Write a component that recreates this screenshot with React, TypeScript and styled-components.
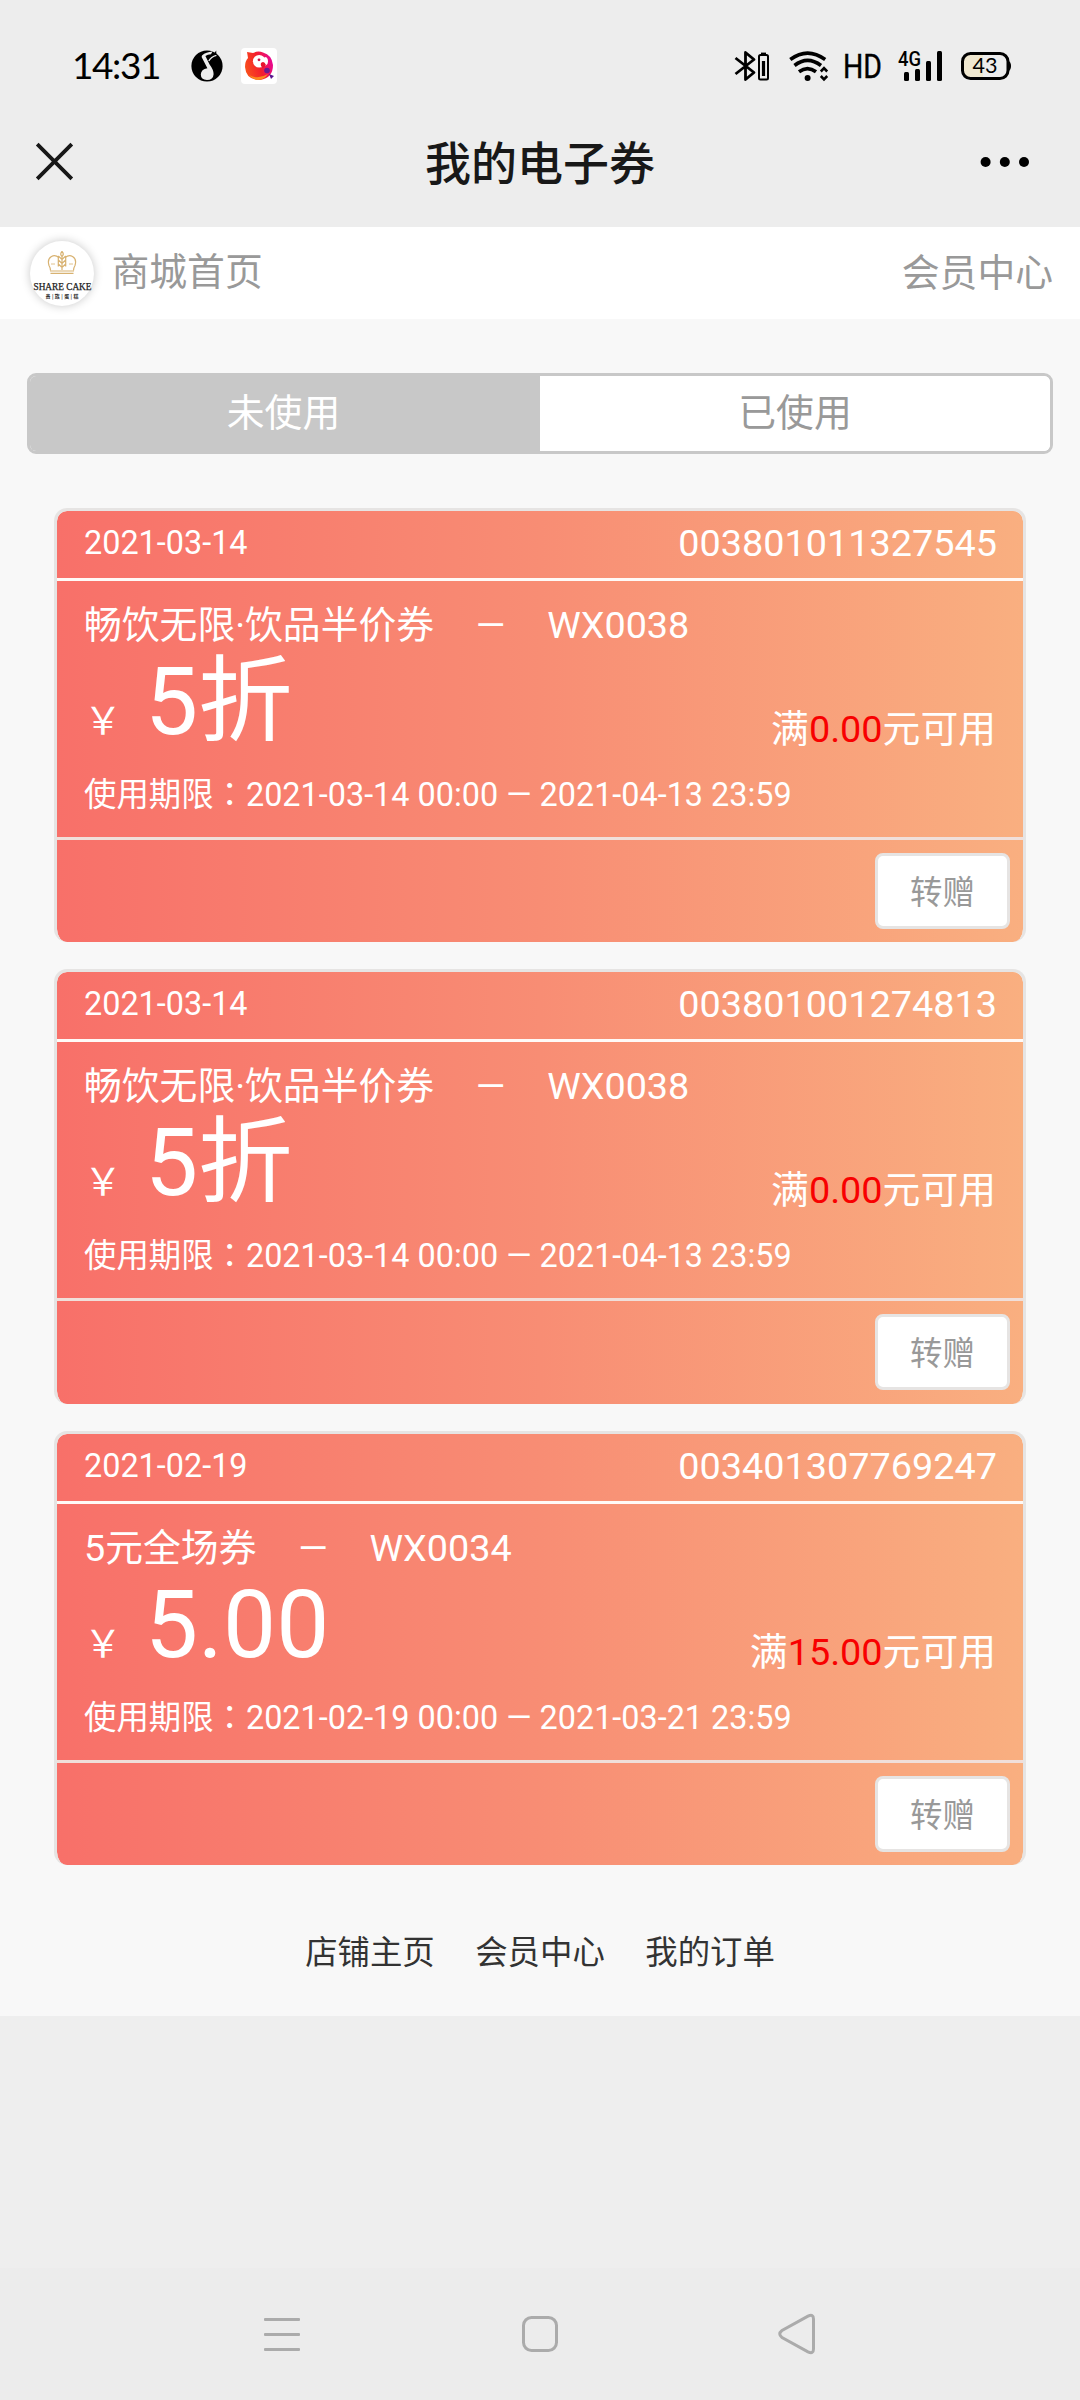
import React from "react";
import styled, { createGlobalStyle } from "styled-components";

const GlobalStyle = createGlobalStyle`
  * { box-sizing: border-box; }
  html, body { margin: 0; padding: 0; background: #ededed; }
  body { font-family: Roboto, "Noto Sans CJK SC", sans-serif; }
`;

const Screen = styled.div`
  width: 1080px;
  height: 2400px;
  display: flex;
  flex-direction: column;
  background: #eeeeee;
  overflow: hidden;
`;

const StatusBar = styled.div`
  height: 96px;
  padding: 36px 69px 0 72px;
  display: flex;
  justify-content: space-between;
  align-items: flex-start;
  background: #ededed;
  color: #000;
`;

const StatusGroup = styled.div`
  display: flex;
  align-items: center;
  height: 60px;
`;

const Clock = styled.span`
  width: 88px;
  font: 400 37px/58px Lato, sans-serif;
  letter-spacing: -1.4px;
  margin-bottom: 2px;
  white-space: nowrap;
`;

const Icon = styled.svg<{ $gap?: number }>`
  display: block;
  flex: none;
  margin-left: ${(p) => p.$gap ?? 0}px;
  overflow: visible;
`;

const TitleBar = styled.header`
  height: 131px;
  padding: 0 50px 0 35px;
  display: grid;
  grid-template-columns: 50px 1fr 50px;
  align-items: center;
  background: #ededed;
`;

const Title = styled.h1`
  margin: 0 0 4px 15px;
  text-align: center;
  font: 500 46px/66px "Noto Sans CJK SC", sans-serif;
  color: #181818;
`;

const ShopBar = styled.div`
  height: 92px;
  padding: 0 27px 0 30px;
  display: flex;
  align-items: center;
  background: #fff;
  color: #999;
  font-size: 37.8px;
  line-height: 54px;
`;

const Logo = styled.span`
  width: 64px;
  height: 65px;
  margin-right: 17.5px;
  border-radius: 50%;
  background: #fff;
  box-shadow: 0 0 10px rgba(0, 0, 0, 0.22);
`;

const ShopLink = styled.span<{ $end?: boolean }>`
  margin-left: ${(p) => (p.$end ? "auto" : "0")};
  margin-bottom: ${(p) => (p.$end ? "0" : "2px")};
`;

const Page = styled.main`
  height: 1697px;
  padding: 54px 27px 0;
  display: flex;
  flex-direction: column;
  background: #f8f8f8;
`;

const Tabs = styled.div`
  height: 81px;
  display: grid;
  grid-template-columns: 1fr 1fr;
  border: 3px solid #c8c8c8;
  border-radius: 9px;
  overflow: hidden;
  background: #fff;
`;

const Tab = styled.div<{ $active?: boolean }>`
  padding-right: ${(p) => (p.$active ? "3px" : "0")};
  text-align: center;
  font-size: 37.8px;
  line-height: 74px;
  background: ${(p) => (p.$active ? "#c8c8c8" : "#fff")};
  color: ${(p) => (p.$active ? "#fff" : "#999")};
`;

const CouponList = styled.div`
  margin-top: 54px;
  padding: 0 27px;
  display: flex;
  flex-direction: column;
  gap: 27px;
`;

const Card = styled.article`
  height: 434.4px;
  display: flex;
  flex-direction: column;
  border: 3px solid #e6e4e3;
  border-bottom: 0;
  border-radius: 13px;
  background: linear-gradient(90deg, #f87069, #f88d74 50%, #f9af80) padding-box;
  color: #fff;
`;

const CardHead = styled.div`
  height: 70px;
  padding: 0 26px 3px 27px;
  display: flex;
  justify-content: space-between;
  align-items: center;
  border-bottom: 3px solid #fffaf7;
  line-height: 60px;
`;

const IssueDate = styled.span`
  font-size: 32.4px;
`;

const Code = styled.span`
  font-size: 37.8px;
`;

const CardBody = styled.div`
  height: 259px;
  padding: 17px 27px 0;
  border-bottom: 3px solid #f0dfda;
`;

const Name = styled.div`
  display: flex;
  gap: 41.8px;
  font-size: 37.8px;
  line-height: 54px;
  height: 54px;
  white-space: nowrap;
`;

const AmountRow = styled.div`
  margin-top: 6px;
  height: 88px;
  display: flex;
  align-items: baseline;
  white-space: nowrap;
  line-height: 88px;
`;

const Currency = styled.span`
  width: 61px;
  font: 400 37.8px/60px "Noto Sans CJK SC", sans-serif;
`;

const Amount = styled.span`
  font-size: 94.5px;
`;

const Condition = styled.span`
  margin-left: auto;
  font-size: 37.8px;
  position: relative;
  top: 8px;
`;

const Threshold = styled.span`
  color: #f80000;
`;

const Period = styled.div`
  margin-top: 21px;
  font-size: 32.4px;
  line-height: 49px;
  white-space: nowrap;
`;

const CenteredColon = styled.span`
  font-family: "Noto Sans CJK TC", sans-serif;
`;

const CardFoot = styled.div`
  flex: 1;
  padding: 13px 13px 0 0;
  display: flex;
  justify-content: flex-end;
`;

const GiftButton = styled.button`
  width: 135px;
  height: 76px;
  padding: 0 0 2px;
  border: 3px solid #e6e4e3;
  border-radius: 8px;
  background: #fff;
  color: #999;
  font: 400 32.4px/66px "Noto Sans CJK SC", sans-serif;
`;

const FooterLinks = styled.nav`
  margin-top: 64px;
  display: flex;
  justify-content: center;
  gap: 40.5px;
  color: #333;
  font-size: 32.4px;
  line-height: 48px;
`;

const NavBar = styled.div`
  margin-top: auto;
  height: 132px;
  padding: 0 265px 0 264px;
  display: flex;
  justify-content: space-between;
  align-items: center;
  background: #ececec;
`;

type Coupon = {
  date: string;
  code: string;
  name: string;
  type: string;
  amount: string;
  min: string;
  period: string;
};

const coupons: Coupon[] = [
  { date: "2021-03-14", code: "003801011327545", name: "畅饮无限·饮品半价券", type: "WX0038", amount: "5折", min: "0.00", period: "2021-03-14 00:00 — 2021-04-13 23:59" },
  { date: "2021-03-14", code: "003801001274813", name: "畅饮无限·饮品半价券", type: "WX0038", amount: "5折", min: "0.00", period: "2021-03-14 00:00 — 2021-04-13 23:59" },
  { date: "2021-02-19", code: "003401307769247", name: "5元全场券", type: "WX0034", amount: "5.00", min: "15.00", period: "2021-02-19 00:00 — 2021-03-21 23:59" },
];

const MusicIcon = () => (
  <Icon $gap={31} width="32" height="32" viewBox="0 0 32 32">
    <circle cx="16" cy="16" r="15.6" fill="#000" />
    <path d="M11 5.4Q15 2 21.5 1.6L20 4.2Q16.5 4.2 14.4 6L18.6 14.5Q22.6 19.8 22.6 24.2Q22.2 30 15.9 30Q9.9 29.8 9.8 24.5Q10 19.3 16.4 18.2L10.6 7Z" fill="#ededed" />
    <path d="M17.8 11Q20 6.8 25.4 5.4" stroke="#ededed" strokeWidth="1.3" fill="none" />
    <path d="M22.5 4.6L25.2 .4L25.4 5Z" fill="#000" />
  </Icon>
);

const ParrotIcon = () => (
  <Icon $gap={18} width="36" height="36" viewBox="0 0 36 36">
    <defs>
      <linearGradient id="feathers" x1="0" y1="0.6" x2="1" y2="0.3">
        <stop offset="0" stopColor="#f9501c" />
        <stop offset="0.5" stopColor="#f4202c" />
        <stop offset="1" stopColor="#e6059a" />
      </linearGradient>
    </defs>
    <rect width="36" height="36" rx="4" fill="#fff" />
    <path d="M6 4L12 5Q17 2.5 22 4.5Q31 7 32 17Q32 30 19 32Q5 32 4 19Q4 13 7 10Z" fill="url(#feathers)" />
    <path d="M8 27Q17 32 27 26Q23 32 16 32Q11 31 8 27Z" fill="#fb8a1e" />
    <circle cx="18.2" cy="13.2" r="6.3" fill="#fff" />
    <path d="M21 17Q21 9 25 9Q28 11 26.5 16L24 18Z" fill="#fff" />
    <path d="M20 15Q23 12 25 17L22 20Q19 18 20 15Z" fill="#e8142e" />
    <circle cx="18" cy="11.8" r="1.4" fill="#d01040" />
    <circle cx="26" cy="22.5" r="2.8" fill="#6a1b8f" />
    <path d="M28 26L33 28L30 31Z" fill="#5b1590" />
  </Icon>
);

const BluetoothIcon = () => (
  <Icon width="36" height="30" viewBox="0 0 36 30" fill="none" stroke="#000">
    <path d="M1.5 7L20 21.5L11.5 28.5V1.5L20 8.5L1.5 23" strokeWidth="2.8" strokeLinejoin="round" />
    <rect x="25" y="4" width="9" height="24.5" rx="1.5" strokeWidth="2" />
    <path d="M27 2.6H32" strokeWidth="2" />
    <path d="M29.5 10V25" strokeWidth="3.2" />
  </Icon>
);

const WifiIcon = () => (
  <Icon $gap={19} width="40" height="30" viewBox="0 0 40 30" fill="none" stroke="#000" strokeWidth="3.6">
    <path d="M1.3 8.5Q18.5 -4.3 36.2 8.5" />
    <path d="M5.5 14.5Q18.5 4.3 32 14.5" />
    <path d="M10 20.8Q18.5 14.4 27 20.8" />
    <circle cx="18.6" cy="27" r="3" fill="#000" stroke="none" />
    <path d="M31.8 20.5L35 17.2L38.2 20.5M31.8 25L35 28.3L38.2 25" strokeWidth="2.6" />
  </Icon>
);

const HdIcon = () => (
  <Icon $gap={16} width="36" height="30" viewBox="0 0 36 30">
    <text x="-2" y="27" fontFamily="Roboto" fontSize="34" textLength="39" lengthAdjust="spacingAndGlyphs" stroke="#000" strokeWidth="0.4">HD</text>
  </Icon>
);

const SignalIcon = () => (
  <Icon $gap={17} width="44" height="30" viewBox="0 0 44 30">
    <text x="0" y="14.7" fontFamily="Roboto" fontWeight="500" fontSize="20" textLength="23" lengthAdjust="spacingAndGlyphs">4G</text>
    <rect x="6" y="21" width="5" height="9" rx="1.5" />
    <rect x="17" y="18" width="5" height="12" rx="1.5" />
    <rect x="28" y="10" width="5" height="20" rx="1.5" />
    <rect x="39" y="0" width="5" height="30" rx="1.5" />
  </Icon>
);

const BatteryIcon = () => (
  <Icon $gap={19} width="50" height="28" viewBox="0 0 50 28">
    <rect x="1.5" y="1.5" width="45.5" height="25" rx="8" fill="#ededed" />
    <path d="M9 1.5H22V26.5H9Q1.5 26 1.5 18V10Q1.5 2 9 1.5Z" fill="#f0e8d0" />
    <rect x="1.5" y="1.5" width="45.5" height="25" rx="8" fill="none" stroke="#000" strokeWidth="3" />
    <path d="M47.5 9Q50 10 50 14T47.5 19Z" />
    <text x="11.5" y="21" fontFamily="Lato" fontSize="21.5" textLength="25" lengthAdjust="spacingAndGlyphs">43</text>
  </Icon>
);

const CloseIcon = () => (
  <Icon width="39" height="39" viewBox="0 0 39 39" stroke="#181818" strokeWidth="3.8">
    <path d="M2.2 2.2L36.8 36.8M36.8 2.2L2.2 36.8" />
  </Icon>
);

const MoreIcon = () => (
  <Icon width="50" height="12" viewBox="0 0 50 12">
    <circle cx="5.6" cy="6" r="5" />
    <circle cx="24.8" cy="6" r="5" />
    <circle cx="44" cy="6" r="5" />
  </Icon>
);

const ShareCakeMark = () => (
  <Icon width="64" height="65" viewBox="0 0 64 65">
    <g fill="none" stroke="#d8b271" strokeWidth="1.2">
      <path d="M20.5 29.5Q20.5 27 19 24.5Q17 18 21.5 15.5Q25 13.5 29 16.5M43.5 29.5Q43.5 27 45 24.5Q47 18 42.5 15.5Q39 13.5 35 16.5" />
      <path d="M32 10.5Q29.5 13 32 15.5Q34.5 13 32 10.5M32 15.5V29M28.3 15L32 18.5L35.7 15M28.3 19L32 22.5L35.7 19M28.3 23L32 26.5L35.7 23M28.3 15V25.5M35.7 15V25.5" />
      <path d="M21 23H25M39 23H43" strokeWidth="0.8" />
      <path d="M20 30H44M20.5 32.3H43.5" />
    </g>
    <text x="3.5" y="49" fontFamily="Liberation Serif" fontSize="9.4" fill="#222" stroke="#222" strokeWidth="0.25" textLength="58" lengthAdjust="spacingAndGlyphs">SHARE CAKE</text>
    <text x="15.5" y="57.3" fontFamily="Noto Sans CJK SC" fontSize="5" fontWeight="700" fill="#333" textLength="33">贵|族|蛋|糕</text>
  </Icon>
);

const CouponCard = ({ coupon }: { coupon: Coupon }) => (
  <Card>
    <CardHead>
      <IssueDate>{coupon.date}</IssueDate>
      <Code>{coupon.code}</Code>
    </CardHead>
    <CardBody>
      <Name>
        <span>{coupon.name}</span>
        <span>—</span>
        <span>{coupon.type}</span>
      </Name>
      <AmountRow>
        <Currency>￥</Currency>
        <Amount>{coupon.amount}</Amount>
        <Condition>
          满<Threshold>{coupon.min}</Threshold>元可用
        </Condition>
      </AmountRow>
      <Period>
        使用期限<CenteredColon>：</CenteredColon>
        {coupon.period}
      </Period>
    </CardBody>
    <CardFoot>
      <GiftButton>转赠</GiftButton>
    </CardFoot>
  </Card>
);

export default function App() {
  return (
    <Screen>
      <GlobalStyle />
      <StatusBar>
        <StatusGroup>
          <Clock>14:31</Clock>
          <MusicIcon />
          <ParrotIcon />
        </StatusGroup>
        <StatusGroup>
          <BluetoothIcon />
          <WifiIcon />
          <HdIcon />
          <SignalIcon />
          <BatteryIcon />
        </StatusGroup>
      </StatusBar>
      <TitleBar>
        <CloseIcon />
        <Title>我的电子券</Title>
        <MoreIcon />
      </TitleBar>
      <ShopBar>
        <Logo>
          <ShareCakeMark />
        </Logo>
        <ShopLink>商城首页</ShopLink>
        <ShopLink $end>会员中心</ShopLink>
      </ShopBar>
      <Page>
        <Tabs>
          <Tab $active>未使用</Tab>
          <Tab>已使用</Tab>
        </Tabs>
        <CouponList>
          {coupons.map((coupon) => (
            <CouponCard key={coupon.code} coupon={coupon} />
          ))}
        </CouponList>
        <FooterLinks>
          <span>店铺主页</span>
          <span>会员中心</span>
          <span>我的订单</span>
        </FooterLinks>
      </Page>
      <NavBar>
        <Icon width="37" height="33" viewBox="0 0 37 33" fill="#ababab">
          <rect y="0" width="36" height="3" rx="1" />
          <rect y="15" width="36" height="3" rx="1" />
          <rect y="30" width="36" height="3" rx="1" />
        </Icon>
        <Icon width="36" height="36" viewBox="0 0 36 36" fill="none" stroke="#ababab" strokeWidth="3">
          <rect x="1.5" y="1.5" width="33" height="33" rx="8" />
        </Icon>
        <Icon width="37" height="40" viewBox="0 0 37 40" fill="none" stroke="#ababab" strokeWidth="3">
          <path d="M30 2.2Q35.5 -.5 35.5 5V35Q35.5 40.5 30 37.8L4 23.5Q-.5 20 4 16.5Z" />
        </Icon>
      </NavBar>
    </Screen>
  );
}
